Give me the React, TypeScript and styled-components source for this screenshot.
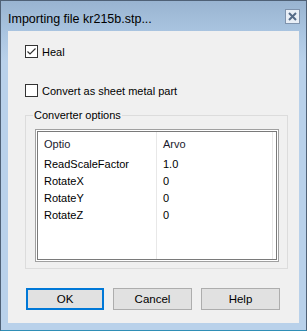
import React from "react";
import styled, { createGlobalStyle } from "styled-components";

const Global = createGlobalStyle`
  html, body { margin: 0; padding: 0; background: #ffffff; }
  body { font-family: "Liberation Sans", Arial, sans-serif; }
  * { box-sizing: border-box; }
`;

const Window = styled.div`
  width: 307px;
  height: 331px;
  border: 1px solid #4f6176;
  border-bottom-color: #2f8fb6;
  background: linear-gradient(#99b4d1 0px, #a9c4e0 30px, #b9d1ea 60px, #b9d1ea 100%);
  display: flex;
  flex-direction: column;
`;

const TitleBar = styled.div`
  height: 30px;
  flex: none;
  display: flex;
  align-items: center;
  padding: 6px 6px 0 7px;
`;

const Title = styled.div`
  flex: 1;
  font-size: 12.5px;
  color: #000;
  white-space: nowrap;
`;

const CloseButton = styled.div`
  align-self: flex-start;
  width: 15px;
  height: 15px;
  margin-top: 2px;
  border: 1px solid #7f93ad;
  background: #e9eff7;
  display: flex;
  align-items: center;
  justify-content: center;
`;

const Client = styled.div`
  flex: 1;
  margin: 0 7px 7px 7px;
  background: #f0f0f0;
  padding: 14px 0 0 17px;
  display: flex;
  flex-direction: column;
  font-size: 11px;
  color: #000;
`;

const CheckRow = styled.label<{ $gap: number }>`
  display: flex;
  align-items: center;
  height: 13px;
  margin-bottom: ${(p) => p.$gap}px;
`;

const Box = styled.span`
  width: 13px;
  height: 13px;
  border: 1px solid #333333;
  background: #ffffff;
  margin-right: 4px;
  display: flex;
  align-items: center;
  justify-content: center;
`;

const GroupBox = styled.div`
  position: relative;
  width: 263px;
  height: 154px;
  border: 1px solid #dcdcdc;
  padding: 13px 8px 6px 9px;
`;

const Legend = styled.span`
  position: absolute;
  top: -8px;
  left: 7px;
  padding: 0 1px;
  background: #f0f0f0;
  line-height: 14px;
`;

const ListBox = styled.div`
  width: 244px;
  height: 133px;
  border: 1px solid #a0a0a0;
  background: #ffffff;
  box-shadow: inset 0 0 0 1px #ffffff, inset 0 0 0 2px #7a7a7a;
  padding: 2px;
  display: flex;
`;

const Column = styled.div<{ $w: number }>`
  width: ${(p) => p.$w}px;
  flex: none;
  border-right: 1px solid #e8e8e8;
  display: flex;
  flex-direction: column;
`;

const HeaderCell = styled.div`
  height: 23px;
  padding-left: 6px;
  display: flex;
  align-items: center;
  color: #1a1a2e;
`;

const Cell = styled.div`
  height: 17px;
  padding-left: 6px;
  display: flex;
  align-items: center;
`;

const ButtonRow = styled.div`
  display: flex;
  gap: 9px;
  margin-top: 19px;
  padding-left: 1px;
`;

const Button = styled.div<{ $default?: boolean }>`
  width: ${(p) => (p.$default ? 78 : 79)}px;
  height: 22px;
  background: #e1e1e1;
  border: ${(p) => (p.$default ? "2px solid #0078d7" : "1px solid #adadad")};
  display: flex;
  align-items: center;
  justify-content: center;
  font-size: 11.5px;
`;

const rows: [string, string][] = [
  ["ReadScaleFactor", "1.0"],
  ["RotateX", "0"],
  ["RotateY", "0"],
  ["RotateZ", "0"],
];

export default function App() {
  return (
    <>
      <Global />
      <Window>
        <TitleBar>
          <Title>Importing file kr215b.stp...</Title>
          <CloseButton>
            <svg width="9" height="9" viewBox="0 0 9 9">
              <path d="M1 1 L8 8 M8 1 L1 8" stroke="#556b88" strokeWidth="2" />
            </svg>
          </CloseButton>
        </TitleBar>
        <Client>
          <CheckRow $gap={26}>
            <Box>
              <svg width="11" height="11" viewBox="0 0 11 11">
                <path d="M1.5 5.5 L4 8 L9.5 2.5" stroke="#333" strokeWidth="1.2" fill="none" />
              </svg>
            </Box>
            Heal
          </CheckRow>
          <CheckRow $gap={18}>
            <Box />
            Convert as sheet metal part
          </CheckRow>
          <GroupBox>
            <Legend>Converter options</Legend>
            <ListBox>
              <Column $w={119}>
                <HeaderCell>Optio</HeaderCell>
                {rows.map(([k]) => (
                  <Cell key={k}>{k}</Cell>
                ))}
              </Column>
              <Column $w={116}>
                <HeaderCell>Arvo</HeaderCell>
                {rows.map(([k, v]) => (
                  <Cell key={k}>{v}</Cell>
                ))}
              </Column>
            </ListBox>
          </GroupBox>
          <ButtonRow>
            <Button $default>OK</Button>
            <Button>Cancel</Button>
            <Button>Help</Button>
          </ButtonRow>
        </Client>
      </Window>
    </>
  );
}
